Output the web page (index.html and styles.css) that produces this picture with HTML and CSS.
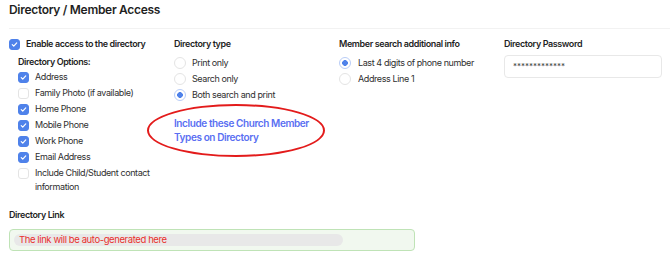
FILE: index.html
```html
<html>

<head>
    <meta name="viewport" content="width=device-width, initial-scale=1">
    <title>Directory / Member Access</title>
    <link rel="stylesheet" href="styles.css">
</head>

<body>
    <h1 class="title">Directory / Member Access</h1>
    <div class="settings">
        <div class="col">
            <label class="check strong">
                <span class="box on"></span>Enable access to the directory
            </label>
            <div class="options">
                <h3 class="label">Directory Options:</h3>
                <label class="check"><span class="box on"></span>Address</label>
                <label class="check"><span class="box"></span>Family Photo (if available)</label>
                <label class="check"><span class="box on"></span>Home Phone</label>
                <label class="check"><span class="box on"></span>Mobile Phone</label>
                <label class="check"><span class="box on"></span>Work Phone</label>
                <label class="check"><span class="box on"></span>Email Address</label>
                <label class="check"><span class="box"></span>Include Child/Student contact information</label>
            </div>
        </div>
        <div class="col">
            <h3 class="label">Directory type</h3>
            <label class="radio"><span class="dot"></span>Print only</label>
            <label class="radio"><span class="dot"></span>Search only</label>
            <label class="radio"><span class="dot on"></span>Both search and print</label>
            <a class="member-types" href="#">Include these Church Member Types on Directory</a>
        </div>
        <div class="col">
            <h3 class="label">Member search additional info</h3>
            <label class="radio"><span class="dot on"></span>Last 4 digits of phone number</label>
            <label class="radio"><span class="dot"></span>Address Line 1</label>
        </div>
        <div class="col">
            <h3 class="label">Directory Password</h3>
            <div class="password">*************</div>
        </div>
    </div>

    <h3 class="label link-label">Directory Link</h3>
    <div class="link-box">
        <span class="link-pill">The link will be auto-generated here</span>
    </div>
</body>

</html>
```

FILE: styles.css
```css
body {
    margin: 0;
    padding: 0 0 0 9px;
    font-family: Inter, "Noto Sans", sans-serif;
    color: #2b2b2b;
    background: white;
    letter-spacing: -0.4px;
}

.title {
    font-size: 12px;
    font-weight: 600;
    line-height: 14px;
    letter-spacing: -0.3px;
    margin: 0;
    padding: 3px 0 11px;
    border-bottom: 1px solid #f2f2f2;
    color: #1f1f1f;
}

.settings {
    display: grid;
    grid-template-columns: 165px 165px 165px 160px;
    padding-top: 7px;
}

.label {
    font-size: 9px;
    font-weight: 600;
    line-height: 14px;
    margin: 0;
    color: #1f1f1f;
}

.col > .label {
    margin-top: 1px;
    margin-bottom: 4px;
}

.check,
.radio {
    display: flex;
    align-items: flex-start;
    gap: 6px;
    font-size: 9px;
    line-height: 16px;
    color: #2f2f2f;
}

.check.strong {
    font-weight: 600;
    color: #1f1f1f;
}

.box {
    flex: none;
    width: 11px;
    height: 11px;
    margin-top: 2.5px;
    border: 1px solid #e4e4e4;
    border-radius: 3px;
    background: white;
    box-sizing: border-box;
}

.box.on {
    border-color: #4f82ea;
    background: #4f82ea url("data:image/svg+xml;utf8,<svg xmlns='http://www.w3.org/2000/svg' viewBox='0 0 12 12'><path d='M3 6.2l2 2 4-4.4' fill='none' stroke='white' stroke-width='1.6' stroke-linecap='round' stroke-linejoin='round'/></svg>") center/100% no-repeat;
}

.options {
    padding-left: 9px;
    padding-top: 3px;
}

.options .check:last-child {
    line-height: 14px;
    padding-top: 1px;
}

.options .check:last-child .box {
    margin-top: 1.5px;
}

.dot {
    flex: none;
    width: 12px;
    height: 12px;
    margin-top: 2px;
    border: 1px solid #e4e4e4;
    border-radius: 50%;
    box-sizing: border-box;
    background: white;
}

.col:nth-child(3) .radio {
    gap: 7px;
}

.dot.on {
    border-color: #b9cdf7;
    background: radial-gradient(circle, #4f82ea 0 2.6px, white 3.1px);
}

.member-types {
    display: block;
    position: relative;
    margin-top: 13px;
    width: 150px;
    font-size: 10px;
    font-weight: 600;
    line-height: 14px;
    color: #5a6ff2;
    text-decoration: none;
}

.member-types::after {
    /* hand-drawn red ring around the link */
    content: "";
    position: absolute;
    left: -27px;
    top: -12px;
    width: 174px;
    height: 49px;
    border: 2.5px solid #e31b1b;
    border-radius: 50%;
}

.password {
    box-sizing: border-box;
    width: 158px;
    height: 23px;
    padding: 0 8px;
    border: 1px solid #e8e8e8;
    border-radius: 4px;
    font-size: 8px;
    line-height: 21px;
    color: #444;
    letter-spacing: 0;
}

.link-label {
    margin-top: 14px;
}

.link-box {
    box-sizing: border-box;
    width: 406px;
    height: 22px;
    margin-top: 7px;
    padding: 4px;
    border: 1px solid #bfe3b6;
    border-radius: 4px;
    background: #f1f8ef;
}

.link-pill {
    display: block;
    width: 329px;
    height: 12px;
    padding-left: 5px;
    box-sizing: border-box;
    border-radius: 6px;
    background: #e8e8e8;
    font-size: 9.5px;
    line-height: 12px;
    color: #e8302c;
}
```
